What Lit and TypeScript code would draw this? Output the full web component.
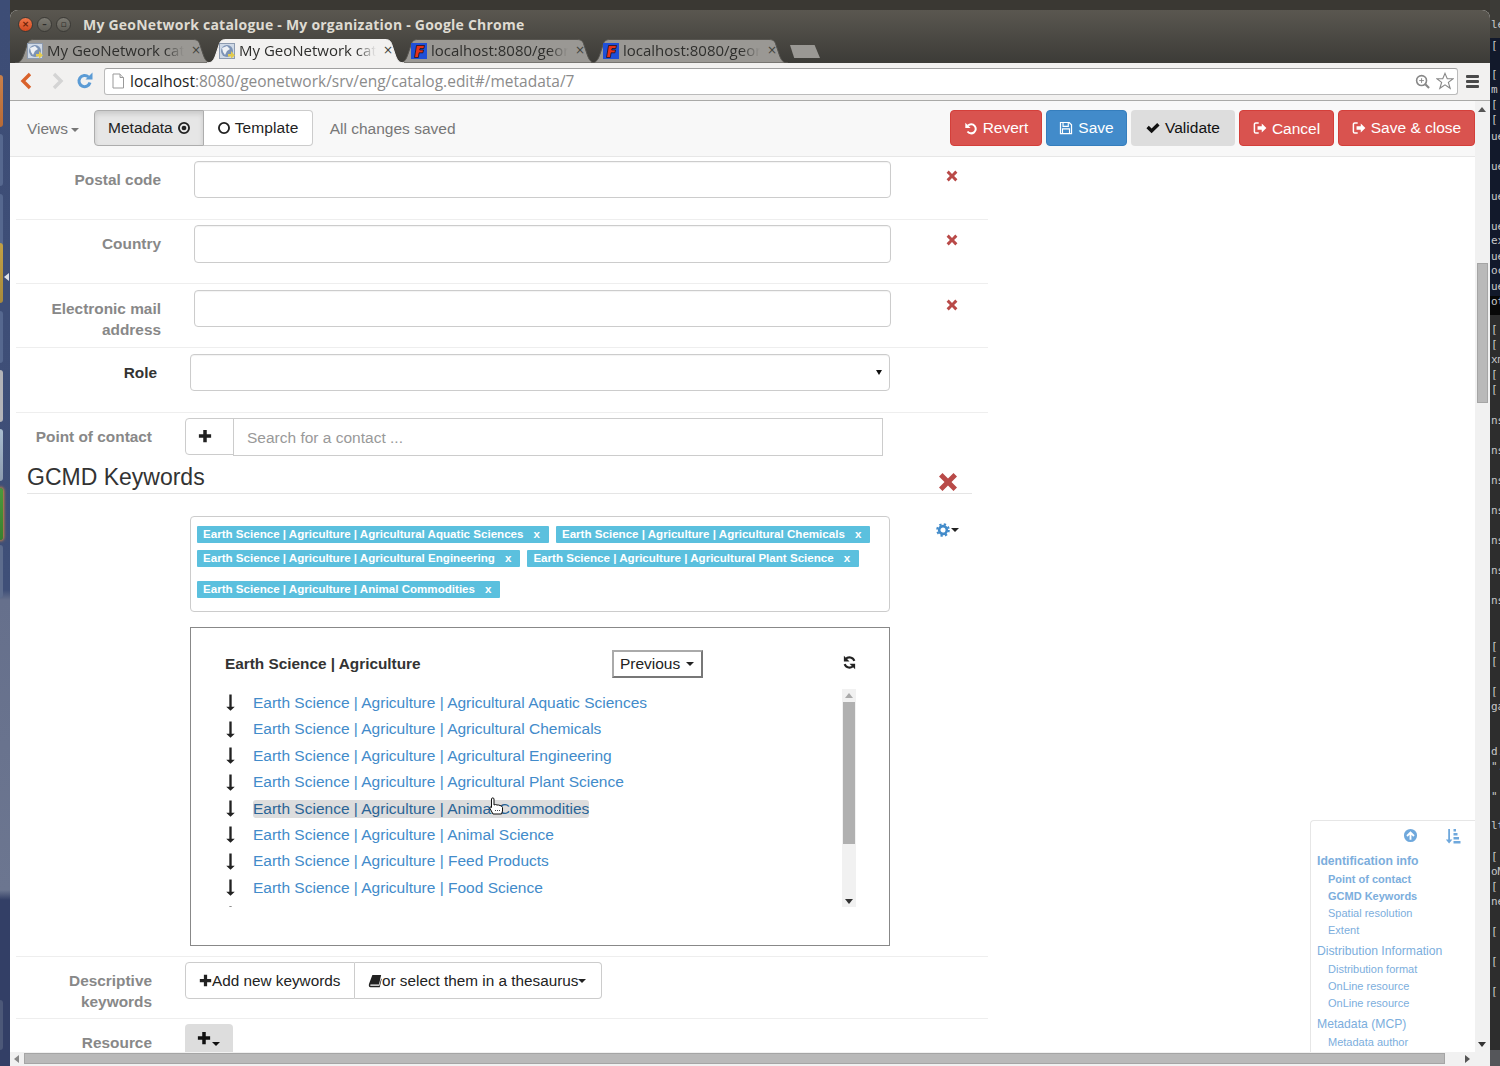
import { LitElement, html, css, svg } from 'lit';
import { customElement } from 'lit/decorators.js';

const ICONS: Record<string, unknown> = {
  x: svg`<path d="M.8 3.600 3.600.8 8 5.200 12.400.8 15.200 3.600 10.800 8 15.200 12.400 12.400 15.200 8 10.800 3.600 15.200.8 12.400 5.200 8Z" fill="currentColor"/>`,
  plus: svg`<path d="M6 1h4v5h5v4h-5v5H6v-5H1V6h5Z" fill="currentColor"/>`,
  down: svg`<path d="M6.900 .5h2.200v11.500h2.900L8 15.800 4 12h2.900Z" fill="currentColor"/>`,
  refresh: svg`<path d="M13.200 6.200A5.600 5.600 0 0 0 3.800 4.400" fill="none" stroke="currentColor" stroke-width="2.200"/><path d="M2 .8v6h6Z" fill="currentColor"/><path d="M2.800 9.800A5.600 5.600 0 0 0 12.200 11.600" fill="none" stroke="currentColor" stroke-width="2.200"/><path d="M14 15.200v-6H8Z" fill="currentColor"/>`,
  gear: svg`<circle cx="8" cy="8" r="4.400" fill="none" stroke="currentColor" stroke-width="3"/><circle cx="8" cy="8" r="6.600" fill="none" stroke="currentColor" stroke-width="2.400" stroke-dasharray="2.600 2.600"/>`,
  undo: svg`<path d="M4.600 5.200A5.200 5.200 0 1 1 4 12" fill="none" stroke="currentColor" stroke-width="2.300"/><path d="M1.500 2v6h6Z" fill="currentColor"/>`,
  save: svg`<path d="M1.700 1.700h10l2.600 2.600v10H1.700Z" fill="none" stroke="currentColor" stroke-width="1.400"/><path d="M4.600 2v4.200h6V2M4 14V9h8v5" fill="none" stroke="currentColor" stroke-width="1.300"/>`,
  check: svg`<path d="M.5 8.200 3.200 5.500 6.400 8.700 12.800 2.300 15.500 5 6.400 14Z" fill="currentColor"/>`,
  out: svg`<path d="M6.500 2.200H3.200A1.600 1.600 0 0 0 1.600 3.800v8.400a1.600 1.600 0 0 0 1.600 1.600h3.300" fill="none" stroke="currentColor" stroke-width="1.700"/><path d="M10 2.800 15.300 8 10 13.200V10H5.200V6H10Z" fill="currentColor"/>`,
  dot: svg`<circle cx="8" cy="8" r="5.800" fill="none" stroke="currentColor" stroke-width="2.100"/><circle cx="8" cy="8" r="2.700" fill="currentColor"/>`,
  ring: svg`<circle cx="8" cy="8" r="5.800" fill="none" stroke="currentColor" stroke-width="2.100"/>`,
  book: svg`<path d="M5 1h10l-2.400 11H3.200c-.9 0-1 1.400 0 1.400h9.800L15 5l.6 1-2.200 9H3C.8 15 .6 12.800 1.200 11Z" fill="currentColor"/>`,
  up: svg`<path fill-rule="evenodd" d="M8 1a7 7 0 1 1 0 14A7 7 0 0 1 8 1ZM8 3.400 3.600 7.800 5 9.200l2-2V12.400h2V7.200l2 2 1.400-1.400Z" fill="currentColor"/>`,
  sort: svg`<path d="M3.200 1h1.800v10.500h2.400L4.100 15.500 .8 11.500h2.400ZM8.500 1h2.500v2.400H8.500ZM8.500 5h4v2.400h-4ZM8.500 9h5.500v2.400H8.500ZM8.500 13h7v2.400h-7Z" fill="currentColor"/>`,
  page: svg`<path d="M3 1h7l3.500 3.500V15H3Z" fill="#fff" stroke="#999"/><path d="M10 1v3.500h3.500" fill="#e4e4e4" stroke="#999"/>`,
  star: svg`<path d="M8 1.200 10 6h5.200l-4.200 3.200 1.600 5.300L8 11.400 3.400 14.500 5 9.200.8 6H6Z" fill="#fff" stroke="#888" stroke-width="1"/>`,
  zoom: svg`<circle cx="7" cy="7" r="5.300" fill="none" stroke="#888" stroke-width="1.700"/><path d="M11 11 15 15" stroke="#888" stroke-width="2.200"/><path d="M7 4.500v5M4.500 7h5" stroke="#888"/>`,
};

const icon = (name: string, size = 14) =>
  html`<svg class="ic" width=${size} height=${size} viewBox="0 0 16 16">${ICONS[name]}</svg>`;

const globe = html`<svg class="fav" width="16" height="16" viewBox="0 0 16 16">
  <rect x=".5" y=".5" width="15" height="15" fill="#cfd9e6" stroke="#8d9bb0" />
  <circle cx="8" cy="8" r="6" fill="#7c93b5" />
  <path d="M3 5 8 3l3 3-3 2-2 4-2-3Z" fill="#eef1f5" />
  <path d="M9 11h3V8l4 4.500-4 3v-2H9Z" fill="#e3cb4e" />
</svg>`;

const gnFav = html`<svg class="fav" width="16" height="16" viewBox="0 0 16 16">
  <rect width="16" height="16" fill="#1f4fd8" />
  <path d="M3.500 14.500 5.500 2.500h8l-.7 3H9l-.3 1.500h3.800l-.6 2.800H8.100L7.300 14.500Z" fill="#e8321a" stroke="#111" stroke-width=".7" />
</svg>`;

const tabShape = html`<svg class="shape" viewBox="0 0 197 24" preserveAspectRatio="none">
  <path d="M0 24C5 24 7 21 9 15L12 6C13 2 15 .5 19 .5H178C182 .5 184 2 185 6L188 15C190 21 192 24 197 24Z" />
</svg>`;

const launcher = [
  [75, 52, 'linear-gradient(#c9804a,#b86a36)'],
  [134, 52, '#56688f'],
  [194, 52, '#56688f'],
  [243, 60, 'linear-gradient(#c2a045,#a88a3c)'],
  [311, 52, '#56688f'],
  [370, 52, '#b4b4b8'],
  [429, 52, 'linear-gradient(#a9bdd0,#8c9bae)'],
  [488, 52, 'linear-gradient(#4c9a3c,#39802e)'],
  [545, 53, '#5d6c8d'],
  [1000, 50, '#4c5878'],
] as [number, number, string][];

const termLines: [number, string][] = [
  [25, 'le'], [46, '['], [75, '['], [90, 'm'], [105, '['], [120, '['], [137, 'ue'], [167, 'ue'], [197, 'ue'],
  [227, 'ue'], [241, 'ex'], [257, 'ue'], [271, 'oc'], [287, 'ue'], [302, 'ot'], [330, '['], [345, '['], [360, 'xm'],
  [375, '['], [390, '['], [421, 'ns'], [451, 'ns'], [481, 'ns'], [511, 'ns'], [541, 'ns'], [571, 'ns'], [601, 'ns'],
  [647, '['], [662, '['], [692, '['], [707, 'ga'], [752, 'd.'], [767, '".'], [797, '"'], [826, 'lt'], [857, '['],
  [872, 'oM'], [887, '['], [902, 'ne'], [932, '['], [962, '['], [992, '['],
];

const TAGS = [
  ['Agricultural Aquatic Sciences', 'Agricultural Chemicals'],
  ['Agricultural Engineering', 'Agricultural Plant Science'],
  ['Animal Commodities'],
];

const TERMS = [
  'Agricultural Aquatic Sciences', 'Agricultural Chemicals', 'Agricultural Engineering', 'Agricultural Plant Science',
  'Animal Commodities', 'Animal Science', 'Feed Products', 'Food Science', 'Forest Science',
];

const TOC: [string, string][] = [
  ['h b', 'Identification info'],
  ['s b', 'Point of contact'],
  ['s b', 'GCMD Keywords'],
  ['s', 'Spatial resolution'],
  ['s', 'Extent'],
  ['h', 'Distribution Information'],
  ['s', 'Distribution format'],
  ['s', 'OnLine resource'],
  ['s', 'OnLine resource'],
  ['h', 'Metadata (MCP)'],
  ['s', 'Metadata author'],
];

@customElement('app-root')
export class AppRoot extends LitElement {
  static styles = css`
    :host {
      display: block;
      width: 1500px;
      height: 1066px;
      overflow: hidden;
      position: relative;
      font-family: 'Liberation Sans', Arial, sans-serif;
      font-size: 15.500px;
      color: #333;
      background: #3a3833;
    }
    * { box-sizing: border-box; }
    svg.ic { display: inline-block; vertical-align: -2px; flex: none; }
    .desk { display: grid; grid-template-columns: 10px 1480px 10px; grid-template-rows: 1fr; height: 100%; padding-top: 10px; }

    .launcher {
      position: absolute; left: 0; top: 0; width: 10px; height: 1066px;
      background: linear-gradient(#3d4d76 0, #3f4f78 590px, #66708c 600px, #6c7690 890px, #333f66 900px);
    }
    .launcher i { position: absolute; left: 0; width: 3px; border-radius: 0 3px 3px 0; }
    .launcher b { position: absolute; left: 4px; top: 273px; border: 4px solid transparent; border-right: 5px solid #dfe3ea; border-left: 0; }
    .launcher .glow { box-shadow: 0 0 3px 1px #d9893d; }

    .term {
      position: absolute; right: 0; top: 0; width: 10px; height: 1066px; overflow: hidden;
      background: linear-gradient(#3c3b37 0 38px, #12192b 38px 296px, #080808 296px 315px, #2d2d2d 315px 1050px, #55565a 1050px);
      font: 11px 'DejaVu Sans Mono', monospace;
      color: #c8c8c8;
    }
    .term span { position: absolute; left: 1px; line-height: 12px; white-space: nowrap; transform: translateY(-6px); }

    .win { grid-column: 2; display: flex; flex-direction: column; height: 1056px; border-radius: 8px 8px 0 0; overflow: hidden; position: relative; background: #fff; }
    .chrome { height: 53px; background: linear-gradient(#5a5750, #3c3b37); flex: none; display: flex; flex-direction: column; }
    .titlebar { height: 29px; flex: none; display: flex; align-items: center; padding-left: 8px; }
    .wbtn { width: 15px; height: 15px; border-radius: 50%; margin-right: 4px; display: flex; align-items: center; justify-content: center; background: linear-gradient(#7c7a72, #5f5d56); border: 1px solid #3b3a36; color: #2e2d2a; font: bold 9px 'DejaVu Sans', sans-serif; line-height: 1; }
    .wbtn.close { background: linear-gradient(#f0774a, #d2491f); color: #6d2309; }
    .wtitle { margin-left: 8px; color: #dfdbd2; font: bold 14px 'Open Sans', sans-serif; letter-spacing: .22px; white-space: nowrap; }
    .tabs { height: 24px; flex: none; display: flex; padding-left: 5px; }
    .tab { width: 192px; height: 24px; position: relative; display: flex; align-items: center; padding-left: 12px; color: #2f2f2d; font: 15px 'Open Sans', sans-serif; flex: none; }
    .tab.on { z-index: 1; }
    .tab .shape { position: absolute; left: 0; top: 0; width: calc(100% + 5px); height: 100%; }
    .tab .shape path { fill: #9a9894; stroke: #55534e; stroke-width: 1; vector-effect: non-scaling-stroke; }
    .tab.on .shape path { fill: #f2f1f0; stroke: #f2f1f0; }
    .tab .fav { position: relative; flex: none; }
    .tab .lbl { position: relative; top: -1px; margin-left: 4px; width: 137px; overflow: hidden; white-space: nowrap;
      -webkit-mask-image: linear-gradient(90deg, #000 118px, transparent 137px); mask-image: linear-gradient(90deg, #000 118px, transparent 137px); }
    .tab .cl { position: relative; top: -1px; margin-left: 7px; font: 12px 'DejaVu Sans', sans-serif; color: #44443f; }
    .newtab { width: 30px; height: 13px; margin: 6px 0 0 7px; background: #9a9894; clip-path: polygon(0 0, 82% 0, 100% 100%, 14% 100%); }

    .toolbar { height: 37px; flex: none; background: #f2f1f0; display: flex; align-items: center; padding-left: 2px; padding-bottom: 1px; }
    .nav { width: 30px; display: flex; justify-content: center; flex: none; }
    .nav.reload { width: 26px; }
    .omni { margin-left: 6px; width: 1354px; height: 27px; border: 1px solid #bbb; border-top-color: #a0a0a0; border-radius: 3px; background: #fff; display: flex; align-items: center; padding: 0 3px 0 5px; }
    .url { margin-left: 4px; font: 15.500px 'Open Sans', sans-serif; color: #8b8b8b; white-space: nowrap; flex: 1; }
    .url b { font-weight: 400; color: #222; }
    .omni .sp { width: 6px; }
    .menu { margin-left: 8px; display: flex; flex-direction: column; gap: 2px; }
    .menu i { width: 13px; height: 3px; background: #4a4a4a; border-radius: 1px; }

    .body { flex: 1; min-height: 0; display: flex; position: relative; border-top: 1px solid #a9a9a7; }
    .main { width: 1465px; flex: none; overflow: hidden; display: flex; flex-direction: column; }
    .vbar { width: 15px; flex: none; background: #f1f1f1; position: relative; }
    .vbar .thumb { position: absolute; top: 162px; left: 2px; width: 11px; height: 140px; background: #b9b9b9; border: 1px solid #a5a5a5; }
    .tri { position: absolute; width: 0; height: 0; border: 4px solid transparent; }
    .tri.u { border-bottom: 5px solid #555; border-top: 0; }
    .tri.d { border-top: 5px solid #555; border-bottom: 0; }
    .tri.l { border-right: 5px solid #888; border-left: 0; }
    .tri.r { border-left: 5px solid #555; border-right: 0; }
    .hbar { position: absolute; left: 0; right: 0; bottom: 0; height: 14px; background: #f1f1f1; }
    .hbar .thumb { position: absolute; left: 14px; top: 1px; width: 1421px; height: 11px; background: #b9b9b9; border: 1px solid #a5a5a5; }

    .head { height: 56px; flex: none; background: #f8f8f8; border-bottom: 1px solid #e7e7e7; display: flex; align-items: center; padding: 0 0 1px 17px; }
    .low { padding-top: 2px; }
    .views { color: #777; margin-right: 15px; display: flex; align-items: center; gap: 3px; }
    .views .caret { margin-top: 1px; }
    .caret { display: inline-block; width: 0; height: 0; border: 4px solid transparent; border-top-color: currentColor; border-bottom: 0; vertical-align: middle; }
    .group { display: flex; height: 36px; color: #222; }
    .group > div { display: flex; align-items: center; background: #fff; border: 1px solid #ccc; white-space: nowrap; }
    .group > div:first-child { border-radius: 4px 0 0 4px; padding: 0 12px 0 13px; gap: 4px; }
    .group > div:last-child { border-radius: 0 4px 4px 0; border-left: 0; padding: 0 13px; gap: 4px; width: 109px; letter-spacing: .1px; }
    .group .active { background: #e6e6e6; border-color: #adadad; box-shadow: inset 0 3px 5px rgba(0,0,0,.125); }
    .saved { margin-left: 17px; color: #777; }
    .actions { margin-left: auto; display: flex; gap: 4px; height: 36px; }
    .btn { display: flex; align-items: center; justify-content: center; gap: 5px; border-radius: 4px; color: #fff; white-space: nowrap; border: 1px solid transparent; flex: none; }
    .btn.w1 { width: 92px; }
    .btn.w2 { width: 81px; }
    .btn.w3 { width: 104px; }
    .btn.w4 { width: 95px; }
    .btn.w5 { width: 137px; }
    .red { background: #d9534f; border-color: #d43f3a; }
    .blue { background: #428bca; border-color: #357ebd; }
    .gray { background: #ddd; color: #111; }

    .form { width: 978px; padding-left: 6px; flex: 1; }
    .row { display: flex; align-items: flex-start; border-bottom: 1px solid #eee; }
    .r1 { height: 63px; padding-top: 4px; }
    .r2 { height: 64px; padding-top: 5px; }
    .r2 .input { height: 38px; }
    .r3 { height: 64px; padding-top: 6px; }
    .r4 { height: 65px; padding-top: 6px; }
    .lab { width: 145px; text-align: right; font-weight: 700; font-size: 15.400px; color: #888; line-height: 21px; padding-top: 8px; flex: none; }
    .input { width: 697px; height: 37px; margin-left: 33px; border: 1px solid #ccc; border-radius: 4px; background: #fff; flex: none; box-shadow: inset 0 1px 1px rgba(0,0,0,.05); }
    .del { margin-left: 55px; margin-top: 9px; color: #b94a48; display: flex; }
    .r4 .lab { width: 141px; color: #333; }
    .r4 .input { width: 700px; margin-left: 33px; position: relative; }
    .r4 .caret { position: absolute; right: 7px; top: 15px; border-width: 5px 3px 0; color: #111; }

    .poc { display: flex; height: 44px; padding-top: 5px; }
    .poc .lab { width: 136px; flex: none; }
    .igroup { margin-left: 33px; display: flex; height: 38px; }
    .addon { width: 49px; height: 37px; border: 1px solid #ccc; border-radius: 4px 0 0 4px; display: flex; align-items: center; padding-left: 12px; padding-bottom: 2px; color: #222; }
    .search { width: 650px; border: 1px solid #ccc; color: #999; padding: 2px 13px 0; display: flex; align-items: center; margin-left: -1px; }

    .section { margin-left: 11px; width: 945px; height: 38px; border-bottom: 1px solid #e5e5e5; font-size: 23px; color: #333; display: flex; justify-content: space-between; align-items: flex-end; line-height: 40px; padding-right: 14px; margin-top: -1px; }
    .section span { height: 36px; }
    .section svg { color: #b94a48; margin-bottom: 1px; }

    .tagline { display: flex; align-items: flex-start; margin: 22px 0 0 174px; }
    .tagbox { width: 700px; height: 96px; border: 1px solid #ccc; border-radius: 4px; padding: 9px 6px 0; }
    .tags { display: flex; gap: 7px; margin-bottom: 7px; }
    .tags.gap { margin-top: 14px; }
    .tag { height: 17px; background: #5bc0de; color: #fff; font: bold 11.590px/16px 'Liberation Sans', sans-serif; padding: 0 9px 0 6px; border-radius: 1px; white-space: nowrap; display: flex; gap: 10px; }
    .gear { margin: 7px 0 0 46px; color: #428bca; display: flex; align-items: center; gap: 1px; }
    .gear .caret { color: #222; border-width: 4px 4px 0; }

    .panel { margin: 15px 0 0 174px; width: 700px; height: 319px; border: 1px solid #888; padding: 22px 34px 0; }
    .ptitle { display: flex; align-items: center; height: 28px; font-weight: 700; font-size: 15.350px; color: #333; white-space: nowrap; }
    .prev { margin-left: 191px; width: 91px; height: 28px; flex: none; border: 2px solid; border-color: #aaa #777 #777 #aaa; font-weight: 400; font-size: 15.500px; color: #222; display: flex; align-items: center; justify-content: center; gap: 6px; background: #fff; }
    .prev .caret { border-width: 4px 4px 0; }
    .ptitle svg { margin-left: 139px; margin-top: -3px; color: #222; }
    .list { margin-top: 11px; height: 218px; width: 631px; overflow: hidden; position: relative; padding-top: .8px; }
    .term-row { display: flex; align-items: center; height: 26.400px; }
    .term-row svg { color: #222; margin-left: -3px; margin-right: 14px; }
    .term-row a { color: #428bca; border-radius: 3px; line-height: 18px; white-space: nowrap; }
    .term-row a.hl { background: #ddd; color: #2a6496; }
    .sbar { position: absolute; right: 0; top: 0; width: 14px; height: 218px; background: #f1f1f1; }
    .sbar .thumb { position: absolute; left: 1px; top: 13px; width: 12px; height: 142px; background: #b0b0b0; }
    .hand { position: absolute; left: 489px; top: 797px; z-index: 3; }

    .rowk { margin-top: 10px; border-top: 1px solid #eee; border-bottom: 1px solid #eee; height: 63px; display: flex; padding-top: 5px; }
    .rowk .lab { width: 136px; }
    .kgroup { margin-left: 33px; display: flex; height: 37px; color: #222; font-size: 15.300px; }
    .kgroup > div { display: flex; align-items: center; border: 1px solid #ccc; padding: 0 13px; white-space: nowrap; }
    .kgroup > div:first-child { border-radius: 4px 0 0 4px; width: 170px; }
    .kgroup > div:last-child { border-radius: 0 4px 4px 0; border-left: 0; width: 247px; }
    .kgroup .caret { border-width: 4px 4px 0; }
    .rowr { display: flex; padding-top: 5px; }
    .rowr .lab { width: 136px; }
    .resbtn { margin-left: 33px; width: 48px; height: 40px; background: #ddd; border-radius: 4px 4px 0 0; display: flex; align-items: flex-start; justify-content: center; padding: 7px 2px 0 0; color: #111; }
    .resbtn .caret { margin: 11px 0 0 1px; border-width: 4px 4px 0; }

    .toc { position: absolute; right: 15px; top: 719px; width: 165px; height: 232px; background: #fff; border: 1px solid #e6e6e6; border-right: 0; border-bottom: 0; border-radius: 4px 0 0 0; padding: 7px 0 0 6px; color: #7caedd; overflow: hidden; }
    .toc .tools { display: flex; height: 17px; padding-left: 86px; gap: 27px; margin-bottom: 8px; color: #6fa8dc; }
    .toc .h { font-size: 12.200px; line-height: 17px; margin: 4px 0 1px; white-space: nowrap; }
    .toc .h.b { margin-top: 2px; }
    .toc .s { font-size: 11px; line-height: 17px; margin-left: 11px; white-space: nowrap; }
    .toc .b { font-weight: 700; }
  `;

  render() {
    return html`
      <div class="launcher">
        ${launcher.map(([top, h, bg], i) => html`<i class=${i === 7 ? 'glow' : ''} style="top:${top}px;height:${h}px;background:${bg}"></i>`)}
        <b></b>
      </div>
      <div class="term">${termLines.map(([y, t]) => html`<span style="top:${y}px">${t}</span>`)}</div>

      <div class="desk">
        <div class="win">
          <div class="chrome">
            <div class="titlebar">
              <div class="wbtn close">×</div>
              <div class="wbtn">–</div>
              <div class="wbtn">▫</div>
              <div class="wtitle">My GeoNetwork catalogue - My organization - Google Chrome</div>
            </div>
            <div class="tabs">
              ${[false, true].map((on) => html`<div class="tab ${on ? 'on' : ''}">${tabShape}${globe}<span class="lbl">My GeoNetwork cata</span><span class="cl">×</span></div>`)}
              ${[0, 1].map(() => html`<div class="tab">${tabShape}${gnFav}<span class="lbl">localhost:8080/geor</span><span class="cl">×</span></div>`)}
              <div class="newtab"></div>
            </div>
          </div>
          <div class="toolbar">
            <div class="nav"><svg width="16" height="18" viewBox="0 0 16 18"><path d="M11 2 4 9l7 7" fill="none" stroke="#d9622b" stroke-width="3.400"/></svg></div>
            <div class="nav"><svg width="16" height="18" viewBox="0 0 16 18"><path d="M5 2l7 7-7 7" fill="none" stroke="#d4d4d4" stroke-width="3.400"/></svg></div>
            <div class="nav reload"><svg width="18" height="18" viewBox="0 0 18 18"><path d="M14 10.500A5.600 5.600 0 1 1 12.500 5" fill="none" stroke="#5b9bd5" stroke-width="3"/><path d="M9.500 7.500h7v-7Z" fill="#5b9bd5"/></svg></div>
            <div class="omni">
              ${icon('page', 16)}
              <div class="url"><b>localhost</b>:8080/geonetwork/srv/eng/catalog.edit#/metadata/7</div>
              ${icon('zoom', 15)}
              <span class="sp"></span>
              ${icon('star', 18)}
            </div>
            <div class="menu"><i></i><i></i><i></i></div>
          </div>

          <div class="body">
            <div class="main">
              <div class="head">
                <div class="views low">Views <span class="caret"></span></div>
                <div class="group">
                  <div class="active">Metadata ${icon('dot', 14)}</div>
                  <div>${icon('ring', 14)} Template</div>
                </div>
                <div class="saved low">All changes saved</div>
                <div class="actions">
                  <div class="btn red w1">${icon('undo')}Revert</div>
                  <div class="btn blue w2">${icon('save')}Save</div>
                  <div class="btn gray w3">${icon('check')}Validate</div>
                  <div class="btn red w4">${icon('out')}<span class="low">Cancel</span></div>
                  <div class="btn red w5">${icon('out')}Save &amp; close</div>
                </div>
              </div>
              <div class="form">
                <div class="row r1"><div class="lab">Postal code</div><div class="input"></div><div class="del">${icon('x', 12)}</div></div>
                <div class="row r2"><div class="lab">Country</div><div class="input"></div><div class="del">${icon('x', 12)}</div></div>
                <div class="row r3"><div class="lab">Electronic mail address</div><div class="input"></div><div class="del">${icon('x', 12)}</div></div>
                <div class="row r4"><div class="lab">Role</div><div class="input"><span class="caret"></span></div></div>
                <div class="poc">
                  <div class="lab">Point of contact</div>
                  <div class="igroup"><div class="addon">${icon('plus', 14)}</div><div class="search">Search for a contact ...</div></div>
                </div>
                <div class="section"><span>GCMD Keywords</span>${icon('x', 20)}</div>
                <div class="tagline">
                  <div class="tagbox">
                    ${TAGS.map((row, i) => html`<div class="tags ${i === 2 ? 'gap' : ''}">
                      ${row.map((t) => html`<div class="tag"><span>Earth Science | Agriculture | ${t}</span><span>x</span></div>`)}
                    </div>`)}
                  </div>
                  <div class="gear">${icon('gear', 14)}<span class="caret"></span></div>
                </div>
                <div class="panel">
                  <div class="ptitle">
                    Earth Science | Agriculture
                    <div class="prev">Previous <span class="caret"></span></div>
                    ${icon('refresh', 15)}
                  </div>
                  <div class="list">
                    ${TERMS.map((t, i) => html`<div class="term-row">${icon('down', 17)}<a class=${i === 4 ? 'hl' : ''}>Earth Science | Agriculture | ${t}</a></div>`)}
                    <div class="sbar">
                      <span class="tri u" style="left:3px;top:4px;border-bottom-color:#aaa"></span>
                      <div class="thumb"></div>
                      <span class="tri d" style="left:3px;bottom:3px;border-top-color:#333"></span>
                    </div>
                  </div>
                </div>
                <div class="rowk">
                  <div class="lab">Descriptive keywords</div>
                  <div class="kgroup">
                    <div>${icon('plus', 13)}Add new keywords</div>
                    <div>${icon('book', 14)}or select them in a thesaurus<span class="caret"></span></div>
                  </div>
                </div>
                <div class="rowr">
                  <div class="lab">Resource</div>
                  <div class="resbtn">${icon('plus', 14)}<span class="caret"></span></div>
                </div>
              </div>
            </div>
            <div class="vbar">
              <span class="tri u" style="left:3px;top:6px"></span>
              <div class="thumb"></div>
              <span class="tri d" style="left:3px;bottom:19px;border-top-color:#333"></span>
            </div>
            <div class="hbar">
              <span class="tri l" style="left:4px;top:3px"></span>
              <div class="thumb"></div>
              <span class="tri r" style="left:1455px;top:3px"></span>
            </div>
            <div class="toc">
              <div class="tools">${icon('up', 15)}${icon('sort', 16)}</div>
              ${TOC.map(([c, t]) => html`<div class=${c}>${t}</div>`)}
            </div>
          </div>
        </div>
      </div>

      <svg class="hand" width="15" height="18" viewBox="0 0 15 18">
        <path d="M2.500 2c0-1.500 2.500-1.500 2.500 0v6l1.500-.5 1.500.5 1.500 0 1.500.5 1.500.5 1 1.500V14l-1 3H4L1 11.500C.5 10 2 9.500 2.500 10.500Z" fill="#fff" stroke="#111" stroke-width="1" />
        <path d="M6.500 13v2M8.500 13v2M10.500 13v2" stroke="#111" stroke-width=".8" stroke-dasharray="1 1" />
      </svg>
    `;
  }
}
